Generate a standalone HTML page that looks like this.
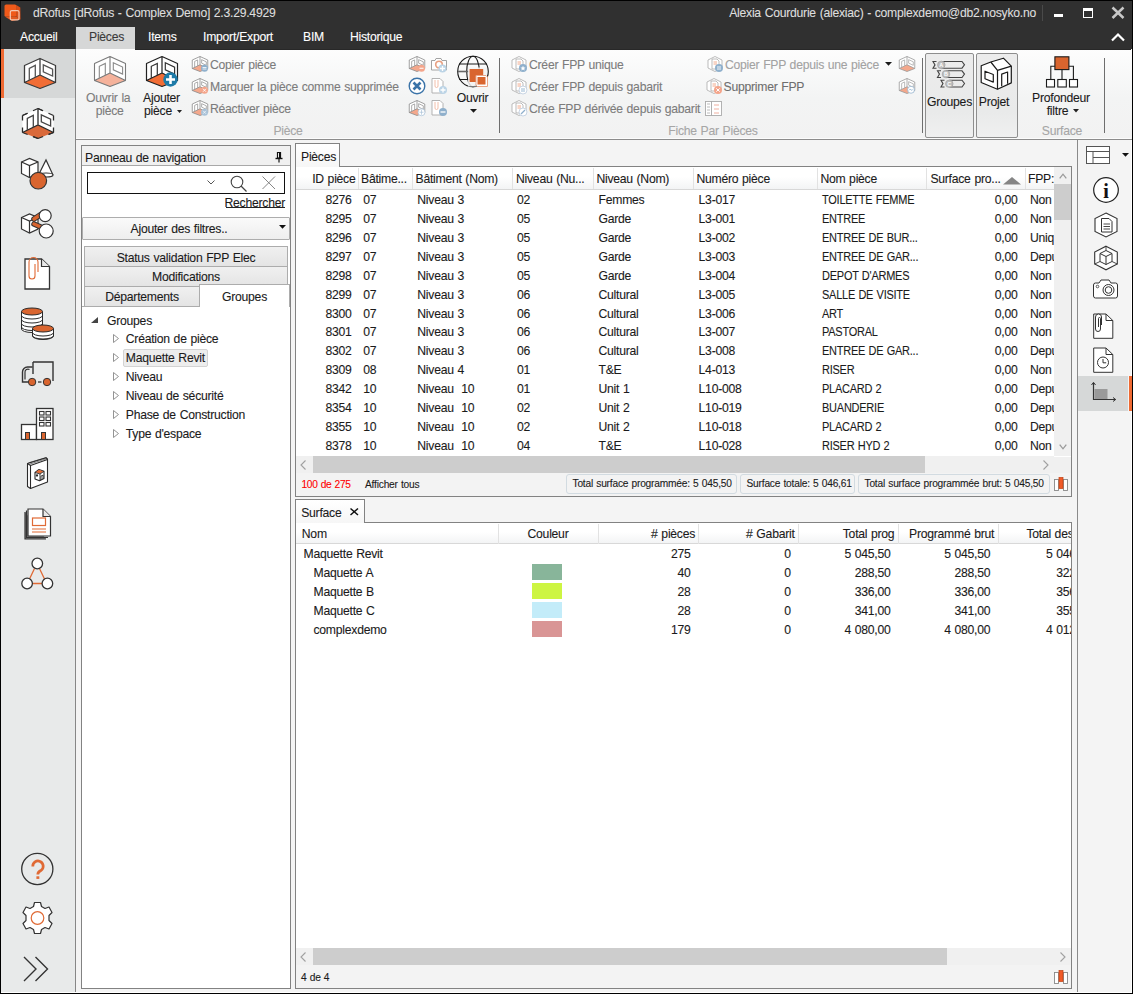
<!DOCTYPE html>
<html><head><meta charset="utf-8">
<style>
*{box-sizing:border-box}
html,body{margin:0;padding:0}
body{width:1133px;height:994px;overflow:hidden;position:relative;background:#000;font-family:"Liberation Sans",sans-serif;font-size:12.2px;color:#1b1b1b}
.a{position:absolute}
.t{position:absolute;white-space:nowrap;line-height:1;letter-spacing:-0.25px;word-spacing:0.6px;-webkit-text-stroke:0.1px currentColor}
svg{position:absolute;overflow:visible}
</style></head><body>
<div class="a" style="left:1px;top:1px;width:1131px;height:48px;background:#303030"></div>
<div class="a" style="left:1px;top:49px;width:1131px;height:944px;background:#f4f4f4;border-right:1px solid #fff;border-bottom:1px solid #fff"></div>
<svg style="left:0px;top:0px;" width="24" height="24" viewBox="0 0 24 24"><path d="M16.3 5 L20.3 7.5 L20.5 19.5 L16.3 17 Z" fill="#d94e18"/>
<path d="M5.5 17 L16.3 16.8 L20.5 19.5 L12 21 Z" fill="#e25a22"/>
<rect x="4.5" y="4.5" width="12" height="12.3" rx="1.6" fill="#f05a1a"/>
<rect x="10.3" y="10.6" width="8.7" height="9.3" rx="1.5" fill="none" stroke="#f4c9b4" stroke-width="1.2"/></svg>
<div class="t" style="top:6.8px;font-size:12.2px;color:#dedede;left:33px;">dRofus [dRofus - Complex Demo] 2.3.29.4929</div>
<div class="t" style="top:6.8px;font-size:12.2px;color:#dedede;left:636px;width:400px;text-align:right;">Alexia Courdurie (alexiac) - complexdemo@db2.nosyko.no</div>
<div class="a" style="left:1042px;top:5px;width:1px;height:16px;background:#4a4a4a"></div>
<div class="a" style="left:1054px;top:14px;width:9px;height:3px;background:#fff"></div>
<div class="a" style="left:1083px;top:8px;width:9.5px;height:9.5px;border:1.2px solid #fff;border-top-width:3px"></div>
<svg style="left:1111px;top:6px;" width="14" height="13" viewBox="0 0 14 13"><path d="M1.5 1.5 L12.5 12 M12.5 1.5 L1.5 12" stroke="#c8c8c8" stroke-width="2.5"/></svg>
<svg style="left:1111px;top:33px;" width="14" height="9" viewBox="0 0 14 9"><path d="M1 7.5 L7 1.5 L13 7.5" stroke="#fff" stroke-width="2.2" fill="none"/></svg>
<div class="a" style="left:76px;top:27px;width:59px;height:22px;background:#d6d7d7"></div>
<div class="t" style="top:31.0px;font-size:12.2px;color:#fff;left:20px;">Accueil</div>
<div class="t" style="top:31.0px;font-size:12.2px;color:#3a3a3a;left:89px;">Pièces</div>
<div class="t" style="top:31.0px;font-size:12.2px;color:#fff;left:148px;">Items</div>
<div class="t" style="top:31.0px;font-size:12.2px;color:#fff;left:203px;">Import/Export</div>
<div class="t" style="top:31.0px;font-size:12.2px;color:#fff;left:303px;">BIM</div>
<div class="t" style="top:31.0px;font-size:12.2px;color:#fff;left:350px;">Historique</div>
<div class="a" style="left:1px;top:49px;width:75px;height:943px;background:#e8eaea;border-right:1px solid #878787"></div>
<div class="a" style="left:1px;top:49px;width:74px;height:49px;background:#d6d8d8"></div>
<div class="a" style="left:1px;top:49px;width:3px;height:49px;background:#ef6a33"></div>
<svg style="left:23.5px;top:58px;" width="32" height="31" viewBox="0 0 32 31"><path d="M16 0.5 L31.5 7.5 L31.5 24.5 L16 17 L0.5 24.5 L0.5 7.5 Z" fill="#fff"/>
<path d="M0.5 24.5 L16 17 L31.5 24.5 L16 30.5 Z" fill="#f26d35"/>
<path d="M16 0.5 L31.5 7.5 L31.5 24.5 L16 30.5 L0.5 24.5 L0.5 7.5 Z M16 0.5 L16 17 M0.5 24.5 L16 17 L31.5 24.5" fill="none" stroke="#3c3c3c" stroke-width="1.3" stroke-linejoin="round" />
<path d="M5.3 22 L5.3 10.3 L11.3 7.4 L11.3 19.3 M19.3 6.8 L28.6 11.1 L28.6 18.1 L19.3 13.8 Z" fill="none" stroke="#555" stroke-width="1.3"/></svg>
<svg style="left:22px;top:108px;" width="32" height="31" viewBox="0 0 32 31"><path d="M16 0.5 L31.5 7.5 L31.5 24.5 L16 30.5 L0.5 24.5 L0.5 7.5 Z" fill="#fff"/>
<path d="M0.5 24.5 L16 17 L31.5 24.5 L16 30.5 Z" fill="#d9693a"/>
<g fill="none" stroke="#2a2a2a" stroke-width="1.3" stroke-dasharray="5.5 6 20">
<path d="M16 0.5 L0.5 7.5"/><path d="M0.5 7.5 L0.5 24.5" stroke-dasharray="0 0.01 5 7 5 20"/><path d="M0.5 24.5 L16 30.5"/><path d="M16 30.5 L31.5 24.5"/><path d="M31.5 24.5 L31.5 7.5" stroke-dasharray="5 7 5 20"/><path d="M31.5 7.5 L16 0.5"/>
<path d="M0.5 7.5 L16 0.5" stroke-dasharray="5.5 20"/><path d="M16 30.5 L0.5 24.5" stroke-dasharray="5.5 20"/><path d="M31.5 24.5 L16 30.5" stroke-dasharray="5.5 20"/><path d="M16 0.5 L31.5 7.5" stroke-dasharray="5.5 20"/></g>
<path d="M16 0.5 L16 17 M0.5 24.5 L16 17 L31.5 24.5" fill="none" stroke="#2a2a2a" stroke-width="1.3"/>
<path d="M5.3 22 L5.3 10.3 L11.3 7.4 L11.3 19.3 M19.3 6.8 L28.6 11.1 L28.6 18.1 L19.3 13.8 Z" fill="none" stroke="#444" stroke-width="1.3"/></svg>
<svg style="left:20px;top:156px;" width="36" height="36" viewBox="0 0 36 36"><path d="M33 19 L26 4 L19.5 17" fill="#fff" stroke="#333" stroke-width="1.2"/>
<ellipse cx="26" cy="19" rx="7" ry="2" fill="#fff" stroke="#333" stroke-width="1.2"/>
<path d="M1.5 6 L9.5 2.5 L18 6 L18 17.5 L9.5 21.5 L1.5 17.5 Z" fill="#fff" stroke="#333" stroke-width="1.2"/>
<path d="M1.5 6 L9.5 9.5 L18 6 M9.5 9.5 L9.5 21.5" fill="none" stroke="#333" stroke-width="1.2"/>
<circle cx="18.3" cy="24.7" r="8.3" fill="#d9652f" stroke="#333" stroke-width="1.2"/></svg>
<svg style="left:20px;top:205px;" width="36" height="36" viewBox="0 0 36 36"><path d="M1.5 12.5 L9.5 9 L18 12.5 L18 24 L9.5 28 L1.5 24 Z" fill="#fff" stroke="#333" stroke-width="1.2"/>
<path d="M1.5 12.5 L9.5 16 L18 12.5 M9.5 16 L9.5 28" fill="none" stroke="#333" stroke-width="1.2"/>
<path d="M14 14 L23 8" stroke="#333" stroke-width="5.5" stroke-linecap="round"/>
<path d="M14 14 L23 8" stroke="#d9652f" stroke-width="3.5" stroke-linecap="round"/>
<path d="M14 19 L23 23" stroke="#333" stroke-width="5.5" stroke-linecap="round"/>
<path d="M14 19 L23 23" stroke="#d9652f" stroke-width="3.5" stroke-linecap="round"/>
<circle cx="25.2" cy="10.6" r="6" fill="#fff" stroke="#333" stroke-width="1.2"/>
<circle cx="26.2" cy="26" r="7" fill="#fff" stroke="#333" stroke-width="1.2"/></svg>
<svg style="left:24px;top:257px;" width="28" height="34" viewBox="0 0 28 34"><path d="M1 2 L17.5 2 L25.5 9.5 L25.5 32 L1 32 Z" fill="#fff" stroke="#333" stroke-width="1.3"/>
<path d="M17.5 2 L17.5 9.5 L25.5 9.5" fill="#e8e8e8" stroke="#333" stroke-width="1.2"/>
<path d="M14 15 L14 5 A4.5 4.5 0 0 0 5 5 L5 19 A3 3 0 0 0 11 19 L11 7" fill="none" stroke="#e06a35" stroke-width="1.1"/></svg>
<svg style="left:20px;top:307px;" width="36" height="34" viewBox="0 0 36 34"><g stroke="#2a2a2a" stroke-width="1">
<path d="M1.5 4.5 L1.5 22 A10.5 3.5 0 0 0 22.5 22 L22.5 4.5" fill="#fff"/>
<path d="M1.5 8.5 A10.5 3.5 0 0 0 22.5 8.5 M1.5 12.5 A10.5 3.5 0 0 0 22.5 12.5 M1.5 16.5 A10.5 3.5 0 0 0 22.5 16.5 M1.5 20 A10.5 3.5 0 0 0 22.5 20" fill="none"/>
<ellipse cx="12" cy="4.5" rx="10.5" ry="3.5" fill="#d9652f"/>
<path d="M12.5 21.5 L12.5 29 A10.5 3.5 0 0 0 33.5 29 L33.5 21.5" fill="#fff"/>
<path d="M12.5 25.5 A10.5 3.5 0 0 0 33.5 25.5 M12.5 28.5 A10.5 3.5 0 0 0 33.5 28.5" fill="none"/>
<ellipse cx="23" cy="21.5" rx="10.5" ry="3.5" fill="#d9652f"/></g></svg>
<svg style="left:20px;top:360px;" width="36" height="28" viewBox="0 0 36 28"><path d="M13 2 L33 2 L33 21" fill="none" stroke="#333" stroke-width="1.4"/>
<path d="M13 2 L13 14" fill="none" stroke="#333" stroke-width="1.4"/>
<path d="M12.5 7 L7.5 7 A5 5 0 0 0 2.5 12 L2.5 22 L8 22" fill="none" stroke="#333" stroke-width="1.4"/>
<path d="M9.5 9.5 A3 3 0 0 0 5 12.5 L5 19.5" fill="none" stroke="#333" stroke-width="1.2"/>
<path d="M18 22 L21.5 22" stroke="#333" stroke-width="1.3"/>
<circle cx="12.1" cy="22" r="3.7" fill="#d9652f" stroke="#333" stroke-width="1"/>
<circle cx="27" cy="22" r="3.7" fill="#d9652f" stroke="#333" stroke-width="1"/></svg>
<svg style="left:20px;top:406px;" width="36" height="36" viewBox="0 0 36 36"><g stroke="#333" stroke-width="1.3">
<rect x="1.5" y="18.5" width="15" height="15" fill="#fff"/>
<rect x="16.5" y="2.5" width="16.5" height="31" fill="#fff"/>
<rect x="5.5" y="26.5" width="4" height="7" fill="#d9652f" stroke-width="1"/>
<rect x="21.5" y="26.5" width="4" height="7" fill="#d9652f" stroke-width="1"/>
<g fill="#fff" stroke-width="1.1"><rect x="19.5" y="5.5" width="4.5" height="3.5"/><rect x="26" y="5.5" width="4.5" height="3.5"/>
<rect x="19.5" y="11" width="4.5" height="3.5"/><rect x="26" y="11" width="4.5" height="3.5"/>
<rect x="19.5" y="16.5" width="4.5" height="3.5"/><rect x="26" y="16.5" width="4.5" height="3.5"/></g></g></svg>
<svg style="left:26px;top:457px;" width="24" height="34" viewBox="0 0 24 34"><g stroke="#2a2a2a" stroke-width="1.1" stroke-linejoin="round">
<path d="M1.5 6.5 L20 0.8 L21.5 2 L21.5 25 L4.5 31.5 L1.5 29.5 Z" fill="#fff"/>
<path d="M1.5 6.5 L4.5 8.5 L21.5 2.5 M4.5 8.5 L4.5 31.5" fill="none"/>
<path d="M2.5 5.8 L20.5 0.5 M3.5 7.2 L21 1.5" fill="none" stroke-width="0.6"/>
<path d="M9 15.5 L13 12.5 L18 14.3 L18 21.5 L13.5 23.8 L9 22 Z" fill="#fff"/>
<path d="M9.5 15.3 L13 12.8 L17.5 14.5 L14 16.8 Z" fill="#e06a35" stroke="none"/>
<path d="M9 15.5 L14 17 L18 14.3 M14 17 L14 23.5" fill="none" stroke-width="0.9"/>
<path d="M15 23 L15 19 L17 18.2 L17 22" fill="none" stroke-width="0.9"/><circle cx="11" cy="18.5" r="0.6" fill="#2a2a2a"/></g></svg>
<svg style="left:22px;top:506px;" width="32" height="36" viewBox="0 0 32 36"><g stroke="#333" stroke-width="1.2">
<path d="M3 6 L3 33 L24 33" fill="#888"/>
<path d="M4.5 4.5 L4.5 31.5 L26 31.5" fill="none"/>
<path d="M6 3 L21 3 L28.5 10.5 L28.5 30 L6 30 Z" fill="#fff"/>
<path d="M21 3 L21 10.5 L28.5 10.5" fill="#e8e8e8"/></g>
<g stroke="#e06a35" stroke-width="1.2" fill="none"><rect x="10.5" y="12" width="13" height="7.5"/><path d="M10 23 L24 23 M10 26 L24 26"/></g></svg>
<svg style="left:20px;top:554px;" width="36" height="36" viewBox="0 0 36 36"><g stroke="#333" stroke-width="1.3" fill="#fff">
<path d="M14.5 14.5 L9.5 25 M19.5 14.5 L24.5 25 M12.5 29.5 L22 29.5" stroke="#e06a35" fill="none"/>
<circle cx="17.3" cy="9.5" r="5.3"/><circle cx="7.1" cy="29.5" r="5.3"/><circle cx="27.4" cy="29.5" r="5.3"/></g></svg>
<svg style="left:19px;top:851px;" width="38" height="38" viewBox="0 0 38 38"><circle cx="18.3" cy="18" r="15.6" fill="none" stroke="#333" stroke-width="1.3"/></svg>
<svg style="left:19px;top:851px;" width="38" height="38" viewBox="0 0 38 38"><path d="M13.8 15.5 A5.2 5.2 0 1 1 22.3 19.2 Q18.8 20.8 18.8 23.5" fill="none" stroke="#e06a35" stroke-width="2.7"/><rect x="17.4" y="25.3" width="2.9" height="2.6" fill="#e06a35"/></svg>
<svg style="left:19px;top:900px;" width="38" height="38" viewBox="0 0 38 38"><path d="M15.5 2.5 L21.5 2.5 L22.5 6.5 L26 8.5 L30 7 L33 12.5 L30 15.5 L30 20.5 L33 23.5 L30 29 L26 27.5 L22.5 29.5 L21.5 33.5 L15.5 33.5 L14.5 29.5 L11 27.5 L7 29 L4 23.5 L7 20.5 L7 15.5 L4 12.5 L7 7 L11 8.5 L14.5 6.5 Z" fill="#fff" stroke="#333" stroke-width="1.2" stroke-linejoin="round"/>
<circle cx="18.5" cy="18" r="6.3" fill="none" stroke="#e06a35" stroke-width="1.2"/></svg>
<svg style="left:22px;top:955px;" width="30" height="28" viewBox="0 0 30 28"><path d="M2 2 L14 14 L2 26 M13.5 2 L25.5 14 L13.5 26" fill="none" stroke="#333" stroke-width="1.4"/></svg>
<div class="a" style="left:76px;top:49px;width:1056px;height:91px;background:linear-gradient(#fdfdfd 0%,#f3f4f4 55%,#f2f2f2 100%);border-bottom:1px solid #8c8c8c"></div>
<div class="a" style="left:76px;top:138px;width:1055px;height:1px;background:#fcfcfc"></div>
<div class="a" style="left:135px;top:49px;width:996px;height:1px;background:#282828"></div>
<svg style="left:94px;top:56px;" width="32" height="31" viewBox="0 0 32 31"><path d="M16 0.5 L31.5 7.5 L31.5 24.5 L16 17 L0.5 24.5 L0.5 7.5 Z" fill="#fff"/>
<path d="M0.5 24.5 L16 17 L31.5 24.5 L16 30.5 Z" fill="#f5b29b"/>
<path d="M16 0.5 L31.5 7.5 L31.5 24.5 L16 30.5 L0.5 24.5 L0.5 7.5 Z M16 0.5 L16 17 M0.5 24.5 L16 17 L31.5 24.5" fill="none" stroke="#7a7a7a" stroke-width="1.1" stroke-linejoin="round" />
<path d="M5.3 22 L5.3 10.3 L11.3 7.4 L11.3 19.3 M19.3 6.8 L28.6 11.1 L28.6 18.1 L19.3 13.8 Z" fill="none" stroke="#8a8a8a" stroke-width="1.1"/></svg>
<div class="t" style="top:92.2px;font-size:12.2px;color:#7c7c7c;left:-91.8px;width:400px;text-align:center;">Ouvrir la</div>
<div class="t" style="top:105.2px;font-size:12.2px;color:#7c7c7c;left:-90.3px;width:400px;text-align:center;">pièce</div>
<svg style="left:146px;top:56px;" width="32" height="31" viewBox="0 0 32 31"><path d="M16 0.5 L31.5 7.5 L31.5 24.5 L16 17 L0.5 24.5 L0.5 7.5 Z" fill="#fff"/>
<path d="M0.5 24.5 L16 17 L31.5 24.5 L16 30.5 Z" fill="#f26d35"/>
<path d="M16 0.5 L31.5 7.5 L31.5 24.5 L16 30.5 L0.5 24.5 L0.5 7.5 Z M16 0.5 L16 17 M0.5 24.5 L16 17 L31.5 24.5" fill="none" stroke="#222" stroke-width="1.2" stroke-linejoin="round" />
<path d="M5.3 22 L5.3 10.3 L11.3 7.4 L11.3 19.3 M19.3 6.8 L28.6 11.1 L28.6 18.1 L19.3 13.8 Z" fill="none" stroke="#333" stroke-width="1.2"/></svg>
<svg style="left:163px;top:72px;" width="15" height="15" viewBox="0 0 15 15"><circle cx="7.5" cy="7.5" r="7.2" fill="#1e7ba8"/><path d="M7.5 3 L7.5 12 M3 7.5 L12 7.5" stroke="#fff" stroke-width="2.6"/></svg>
<div class="t" style="top:92.2px;font-size:12.2px;left:-38.5px;width:400px;text-align:center;">Ajouter</div>
<div class="t" style="top:105.2px;font-size:12.2px;left:-42px;width:400px;text-align:center;">pièce</div>
<svg style="left:176.5px;top:109.5px;" width="5" height="3" viewBox="0 0 5 3"><path d="M0 0 L5 0 L2.5 3 Z" fill="#222"/></svg>
<svg style="left:192px;top:56px;" width="16" height="16" viewBox="0 0 32 31"><path d="M16 0.5 L31.5 7.5 L31.5 24.5 L16 17 L0.5 24.5 L0.5 7.5 Z" fill="#fff"/>
<path d="M0.5 24.5 L16 17 L31.5 24.5 L16 30.5 Z" fill="#f4a88c"/>
<path d="M16 0.5 L31.5 7.5 L31.5 24.5 L16 30.5 L0.5 24.5 L0.5 7.5 Z M16 0.5 L16 17 M0.5 24.5 L16 17 L31.5 24.5" fill="none" stroke="#8a8a8a" stroke-width="1.6" stroke-linejoin="round" />
<path d="M5.3 22 L5.3 10.3 L11.3 7.4 L11.3 19.3 M19.3 6.8 L28.6 11.1 L28.6 18.1 L19.3 13.8 Z" fill="none" stroke="#999" stroke-width="1.6"/><circle cx="25" cy="24" r="7" fill="#8fb0cc"/><path d="M21 22.5 L29 22.5 M21 25.5 L29 25.5" stroke="#fff" stroke-width="1.6"/></svg>
<div class="t" style="top:58.9px;font-size:12.2px;color:#7c7c7c;left:210px;">Copier pièce</div>
<svg style="left:192px;top:78px;" width="16" height="16" viewBox="0 0 32 31"><path d="M16 0.5 L31.5 7.5 L31.5 24.5 L16 17 L0.5 24.5 L0.5 7.5 Z" fill="#fff"/>
<path d="M0.5 24.5 L16 17 L31.5 24.5 L16 30.5 Z" fill="#f4a88c"/>
<path d="M16 0.5 L31.5 7.5 L31.5 24.5 L16 30.5 L0.5 24.5 L0.5 7.5 Z M16 0.5 L16 17 M0.5 24.5 L16 17 L31.5 24.5" fill="none" stroke="#8a8a8a" stroke-width="1.6" stroke-linejoin="round" />
<path d="M5.3 22 L5.3 10.3 L11.3 7.4 L11.3 19.3 M19.3 6.8 L28.6 11.1 L28.6 18.1 L19.3 13.8 Z" fill="none" stroke="#999" stroke-width="1.6"/><circle cx="25" cy="24" r="7" fill="#f4a58b"/><path d="M22 21 L28 27 M28 21 L22 27" stroke="#fff" stroke-width="1.8"/></svg>
<div class="t" style="top:80.9px;font-size:12.2px;color:#7c7c7c;left:210px;">Marquer la pièce comme supprimée</div>
<svg style="left:192px;top:100px;" width="16" height="16" viewBox="0 0 32 31"><path d="M16 0.5 L31.5 7.5 L31.5 24.5 L16 17 L0.5 24.5 L0.5 7.5 Z" fill="#fff"/>
<path d="M0.5 24.5 L16 17 L31.5 24.5 L16 30.5 Z" fill="#f4a88c"/>
<path d="M16 0.5 L31.5 7.5 L31.5 24.5 L16 30.5 L0.5 24.5 L0.5 7.5 Z M16 0.5 L16 17 M0.5 24.5 L16 17 L31.5 24.5" fill="none" stroke="#8a8a8a" stroke-width="1.6" stroke-linejoin="round" />
<path d="M5.3 22 L5.3 10.3 L11.3 7.4 L11.3 19.3 M19.3 6.8 L28.6 11.1 L28.6 18.1 L19.3 13.8 Z" fill="none" stroke="#999" stroke-width="1.6"/><circle cx="25" cy="24" r="7" fill="#a9c2d8"/><path d="M22 21 L28 27 M28 21 L22 27" stroke="#fff" stroke-width="1.4"/></svg>
<div class="t" style="top:102.9px;font-size:12.2px;color:#7c7c7c;left:210px;">Réactiver pièce</div>
<svg style="left:409px;top:56px;" width="16" height="16" viewBox="0 0 32 31"><path d="M16 0.5 L31.5 7.5 L31.5 24.5 L16 17 L0.5 24.5 L0.5 7.5 Z" fill="#fff"/>
<path d="M0.5 24.5 L16 17 L31.5 24.5 L16 30.5 Z" fill="#f4a88c"/>
<path d="M16 0.5 L31.5 7.5 L31.5 24.5 L16 30.5 L0.5 24.5 L0.5 7.5 Z M16 0.5 L16 17 M0.5 24.5 L16 17 L31.5 24.5" fill="none" stroke="#8a8a8a" stroke-width="1.6" stroke-linejoin="round" />
<path d="M5.3 22 L5.3 10.3 L11.3 7.4 L11.3 19.3 M19.3 6.8 L28.6 11.1 L28.6 18.1 L19.3 13.8 Z" fill="none" stroke="#999" stroke-width="1.6"/><circle cx="25" cy="24" r="7" fill="#f4a58b"/><path d="M21 24 L29 24" stroke="#fff" stroke-width="2"/></svg>
<svg style="left:409px;top:100px;" width="16" height="16" viewBox="0 0 32 31"><path d="M16 0.5 L31.5 7.5 L31.5 24.5 L16 17 L0.5 24.5 L0.5 7.5 Z" fill="#fff"/>
<path d="M0.5 24.5 L16 17 L31.5 24.5 L16 30.5 Z" fill="#f4a88c"/>
<path d="M16 0.5 L31.5 7.5 L31.5 24.5 L16 30.5 L0.5 24.5 L0.5 7.5 Z M16 0.5 L16 17 M0.5 24.5 L16 17 L31.5 24.5" fill="none" stroke="#8a8a8a" stroke-width="1.6" stroke-linejoin="round" />
<path d="M5.3 22 L5.3 10.3 L11.3 7.4 L11.3 19.3 M19.3 6.8 L28.6 11.1 L28.6 18.1 L19.3 13.8 Z" fill="none" stroke="#999" stroke-width="1.6"/><circle cx="25" cy="24" r="7" fill="#fff" stroke="#a9c2d8" stroke-width="1.5"/><path d="M25 19 L25 29 M21 24 L29 24" stroke="#a9c2d8" stroke-width="1.4"/></svg>
<svg style="left:408px;top:77px;" width="18" height="18" viewBox="0 0 18 18"><circle cx="9" cy="9" r="7.8" fill="#fff" stroke="#3a73a8" stroke-width="1.4"/><path d="M5.5 5.5 L12.5 12.5 M12.5 5.5 L5.5 12.5" stroke="#3a73a8" stroke-width="2.6"/></svg>
<svg style="left:431px;top:57px;" width="16" height="16" viewBox="0 0 16 16"><path d="M0.5 3.5 L4 3.5 L5 1.5 L10 1.5 L11 3.5 L15.5 3.5 L15.5 13 L0.5 13 Z" fill="#fff" stroke="#999" stroke-width="0.9"/>
<circle cx="8" cy="7.5" r="3.3" fill="none" stroke="#e8a082" stroke-width="1.6"/>
<circle cx="11.5" cy="11.5" r="4" fill="#bcd4e6"/><path d="M11.5 9 L11.5 14 M9 11.5 L14 11.5" stroke="#fff" stroke-width="1.3"/></svg>
<svg style="left:431px;top:78px;" width="16" height="16" viewBox="0 0 16 16"><path d="M1 0.5 L9 0.5 L12 3.5 L12 15 L1 15 Z" fill="#fff" stroke="#aaa" stroke-width="0.9"/>
<path d="M4 2 L4 8 A1.5 1.5 0 0 0 7 8 L7 2" fill="none" stroke="#f0b8a0" stroke-width="0.9"/><circle cx="12" cy="12" r="4" fill="#bcd4e6"/><path d="M12 9.5 L12 14.5 M9.5 12 L14.5 12" stroke="#fff" stroke-width="1.3"/></svg>
<svg style="left:431px;top:100px;" width="16" height="16" viewBox="0 0 16 16"><path d="M1 0.5 L9 0.5 L12 3.5 L12 15 L1 15 Z" fill="#fff" stroke="#aaa" stroke-width="0.9"/>
<path d="M4 2 L4 8 A1.5 1.5 0 0 0 7 8 L7 2" fill="none" stroke="#f0b8a0" stroke-width="0.9"/><circle cx="12" cy="12" r="4" fill="#8fb0cc"/><path d="M9.5 12 L14.5 12" stroke="#fff" stroke-width="1.3"/></svg>
<svg style="left:456px;top:55px;" width="36" height="36" viewBox="0 0 36 36"><g fill="none" stroke="#1a1a1a" stroke-width="1.1">
<circle cx="17" cy="16.5" r="15.3"/><ellipse cx="17" cy="16.5" rx="6.3" ry="15.3"/>
<path d="M3.2 9 L30.8 9 M1.7 16.5 L14 16.5 M3.2 24.5 L14 24.5"/></g>
<path d="M1.7 16.5 L14 16.5" stroke="#666" stroke-width="1.6"/>
<rect x="12" y="12.5" width="19" height="19" fill="#f3f3f3" opacity="0.85"/>
<rect x="13.6" y="14" width="13.6" height="13" fill="#d9652f"/>
<path d="M20 20.5 L30 20.5 L31.5 22 L31.5 31.5 L21.5 31.5 L20 30 Z" fill="#fff" stroke="#e9a588" stroke-width="1"/>
<rect x="21.5" y="22" width="8" height="7.5" fill="#d9652f"/></svg>
<div class="t" style="top:92.2px;font-size:12.2px;left:272.5px;width:400px;text-align:center;">Ouvrir</div>
<svg style="left:470px;top:108.5px;" width="7" height="4" viewBox="0 0 7 4"><path d="M0 0 L7 0 L3.5 3.8 Z" fill="#1a1a1a"/></svg>
<div class="t" style="top:125.1px;font-size:12.2px;color:#a6a6a6;left:88px;width:400px;text-align:center;">Pièce</div>
<div class="a" style="left:499px;top:58px;width:1px;height:75px;background:#6e6e6e"></div>
<svg style="left:511px;top:56px;" width="16" height="16" viewBox="0 0 16 16"><path d="M8 0.5 L15 4 L15 12 L8 15.5 L1 12 L1 4 Z" fill="#fff" stroke="#aaa" stroke-width="0.8"/>
<path d="M5 3 L10 3 L12 5 L12 13 L5 13 Z" fill="#fff" stroke="#aaa" stroke-width="0.8"/>
<path d="M6.5 6 L10 6 M6.5 8 L10 8" stroke="#f0a080" stroke-width="0.9"/><circle cx="12" cy="12" r="4" fill="#8fb0cc"/><path d="M12 9.7 L12.8 11.4 L14.5 11.6 L13.2 12.8 L13.6 14.5 L12 13.6 L10.4 14.5 L10.8 12.8 L9.5 11.6 L11.2 11.4 Z" fill="#fff"/></svg>
<div class="t" style="top:58.9px;font-size:12.2px;color:#7c7c7c;left:529px;">Créer FPP unique</div>
<svg style="left:511px;top:78px;" width="16" height="16" viewBox="0 0 16 16"><path d="M8 0.5 L15 4 L15 12 L8 15.5 L1 12 L1 4 Z" fill="#fff" stroke="#aaa" stroke-width="0.8"/>
<path d="M5 3 L10 3 L12 5 L12 13 L5 13 Z" fill="#fff" stroke="#aaa" stroke-width="0.8"/>
<path d="M6.5 6 L10 6 M6.5 8 L10 8" stroke="#f0a080" stroke-width="0.9"/><circle cx="12" cy="12" r="4" fill="#fff" stroke="#bcd" stroke-width="0.8"/><path d="M10 11 L14 11 M10 13 L14 13" stroke="#8fb0cc" stroke-width="0.9"/></svg>
<div class="t" style="top:80.9px;font-size:12.2px;color:#7c7c7c;left:529px;">Créer FPP depuis gabarit</div>
<svg style="left:511px;top:100px;" width="16" height="16" viewBox="0 0 16 16"><path d="M8 0.5 L15 4 L15 12 L8 15.5 L1 12 L1 4 Z" fill="#fff" stroke="#aaa" stroke-width="0.8"/>
<path d="M5 3 L10 3 L12 5 L12 13 L5 13 Z" fill="#fff" stroke="#aaa" stroke-width="0.8"/>
<path d="M6.5 6 L10 6 M6.5 8 L10 8" stroke="#f0a080" stroke-width="0.9"/><circle cx="12" cy="12" r="4" fill="#fff" stroke="#bcd" stroke-width="0.8"/><path d="M10 14 L14 10" stroke="#8fb0cc" stroke-width="1.3"/></svg>
<div class="t" style="top:102.9px;font-size:12.2px;color:#7c7c7c;left:529px;">Crée FPP dérivée depuis gabarit</div>
<svg style="left:705px;top:101px;" width="17" height="15" viewBox="0 0 17 15"><g fill="#fff" stroke="#aaa" stroke-width="0.9"><rect x="0.5" y="0.5" width="6" height="14"/><rect x="6.5" y="0.5" width="10" height="14"/></g>
<path d="M2 3 L5 3 M2 6 L5 6 M2 9 L5 9 M2 12 L5 12" stroke="#bbb"/><path d="M9 4 L14 4 M9 8 L14 8 M9 12 L14 12" stroke="#f0b0a0"/></svg>
<svg style="left:707px;top:56px;" width="16" height="16" viewBox="0 0 16 16"><path d="M8 0.5 L15 4 L15 12 L8 15.5 L1 12 L1 4 Z" fill="#fff" stroke="#aaa" stroke-width="0.8"/>
<path d="M5 3 L10 3 L12 5 L12 13 L5 13 Z" fill="#fff" stroke="#aaa" stroke-width="0.8"/>
<path d="M6.5 6 L10 6 M6.5 8 L10 8" stroke="#f0a080" stroke-width="0.9"/><circle cx="12" cy="12" r="4" fill="#8fb0cc"/><path d="M10 11 L14 11 M10 13 L14 13" stroke="#fff" stroke-width="0.9"/></svg>
<div class="t" style="top:58.9px;font-size:12.2px;color:#a2a2a2;left:725px;">Copier FPP depuis une pièce</div>
<svg style="left:885px;top:62px;" width="7" height="4" viewBox="0 0 7 4"><path d="M0 0 L7 0 L3.5 3.8 Z" fill="#1a1a1a"/></svg>
<svg style="left:706px;top:78px;" width="16" height="16" viewBox="0 0 16 16"><path d="M8 0.5 L15 4 L15 12 L8 15.5 L1 12 L1 4 Z" fill="#fff" stroke="#aaa" stroke-width="0.8"/>
<path d="M5 3 L10 3 L12 5 L12 13 L5 13 Z" fill="#fff" stroke="#aaa" stroke-width="0.8"/>
<path d="M6.5 6 L10 6 M6.5 8 L10 8" stroke="#f0a080" stroke-width="0.9"/><circle cx="12" cy="12" r="4" fill="#f4a58b"/><path d="M10.3 10.3 L13.7 13.7 M13.7 10.3 L10.3 13.7" stroke="#fff" stroke-width="1"/></svg>
<div class="t" style="top:80.7px;font-size:12.2px;color:#6e6e6e;left:723.5px;">Supprimer FPP</div>
<svg style="left:899px;top:56px;" width="16" height="16" viewBox="0 0 32 31"><path d="M16 0.5 L31.5 7.5 L31.5 24.5 L16 17 L0.5 24.5 L0.5 7.5 Z" fill="#fff"/>
<path d="M0.5 24.5 L16 17 L31.5 24.5 L16 30.5 Z" fill="#f4a88c"/>
<path d="M16 0.5 L31.5 7.5 L31.5 24.5 L16 30.5 L0.5 24.5 L0.5 7.5 Z M16 0.5 L16 17 M0.5 24.5 L16 17 L31.5 24.5" fill="none" stroke="#999" stroke-width="1.6" stroke-linejoin="round" />
<path d="M5.3 22 L5.3 10.3 L11.3 7.4 L11.3 19.3 M19.3 6.8 L28.6 11.1 L28.6 18.1 L19.3 13.8 Z" fill="none" stroke="#aaa" stroke-width="1.6"/></svg>
<svg style="left:899px;top:78px;" width="16" height="16" viewBox="0 0 32 31"><path d="M16 0.5 L31.5 7.5 L31.5 24.5 L16 17 L0.5 24.5 L0.5 7.5 Z" fill="#fff"/>
<path d="M0.5 24.5 L16 17 L31.5 24.5 L16 30.5 Z" fill="#f4a88c"/>
<path d="M16 0.5 L31.5 7.5 L31.5 24.5 L16 30.5 L0.5 24.5 L0.5 7.5 Z M16 0.5 L16 17 M0.5 24.5 L16 17 L31.5 24.5" fill="none" stroke="#999" stroke-width="1.6" stroke-linejoin="round" />
<path d="M5.3 22 L5.3 10.3 L11.3 7.4 L11.3 19.3 M19.3 6.8 L28.6 11.1 L28.6 18.1 L19.3 13.8 Z" fill="none" stroke="#aaa" stroke-width="1.6"/><circle cx="24" cy="23" r="7" fill="#fff" stroke="#8fb0cc" stroke-width="1.5"/><path d="M20 24 Q22 20 24 23 T28 22" fill="none" stroke="#8fb0cc" stroke-width="1.5"/></svg>
<div class="t" style="top:125.1px;font-size:12.2px;color:#a6a6a6;left:513px;width:400px;text-align:center;">Fiche Par Pièces</div>
<div class="a" style="left:922px;top:58px;width:1px;height:75px;background:#6e6e6e"></div>
<div class="a" style="left:925px;top:53px;width:49px;height:85px;background:linear-gradient(#ececec,#e9eaea 70%,#f0f0f0);border:1px solid #8e8e8e;border-radius:2px"></div>
<div class="a" style="left:976px;top:53px;width:42px;height:85px;background:linear-gradient(#ececec,#e9eaea 70%,#f0f0f0);border:1px solid #8e8e8e;border-radius:2px"></div>
<svg style="left:925px;top:54px;" width="48" height="40" viewBox="0 0 48 40"><g fill="none" stroke="#444" stroke-width="1.1">
<path d="M16.5 7.5 L37 7.5 L39.5 10.8 L37 14.2 L16.5 14.2"/>
<path d="M21 16.8 L37 16.8 L39.5 20.1 L37 23.5 L21 23.5"/>
<path d="M24.5 26.2 L37 26.2 L39.5 29.5 L37 33 L24.5 33"/>
<path d="M11.5 7.5 L8 7.5 L10 10.9 L8 14.3 L11.5 14.3 M16 16.8 L12.5 16.8 L14.5 20.1 L12.5 23.5 L16 23.5 M19.5 26.2 L16 26.2 L18 29.6 L16 33 L19.5 33"/></g>
<g fill="#bdbdbd" stroke="#9a9a9a" stroke-width="0.6"><circle cx="16.3" cy="10.9" r="3.8"/><circle cx="21" cy="20.1" r="3.8"/><circle cx="24.3" cy="29.8" r="3.8"/></g>
<g font-family="Liberation Sans" font-size="5.5" font-weight="bold" fill="#fff" text-anchor="middle"><text x="16.3" y="12.9">A</text><text x="21" y="22.1">B</text><text x="24.3" y="31.8">C</text></g></svg>
<div class="t" style="top:95.7px;font-size:12.2px;left:749.5px;width:400px;text-align:center;">Groupes</div>
<svg style="left:978px;top:55px;" width="36" height="36" viewBox="0 0 36 36"><g fill="#fff" stroke="#1a1a1a" stroke-width="1.2" stroke-linejoin="round">
<path d="M3.2 10.7 L12.8 7 L25.4 3.2 L33.3 11.2 L33.3 27.9 L19.5 34.2 L3.2 27.5 Z"/>
<path d="M12.8 7 L19.5 15.3 L33.3 11.2 M19.5 15.3 L19.5 34.2" fill="none"/>
<path d="M7 16.2 L15.3 19.5 L15.3 27.1 L7 23.7 Z"/>
<path d="M23.7 31.3 L23.7 19.1 L29.6 17 L29.6 28.8" fill="none"/></g></svg>
<div class="t" style="top:95.7px;font-size:12.2px;left:794px;width:400px;text-align:center;">Projet</div>
<svg style="left:1045px;top:56px;" width="34" height="33" viewBox="0 0 34 33"><rect x="9.9" y="0.8" width="14" height="12.8" fill="#d9652f" stroke="#1a1a1a" stroke-width="1.1"/>
<path d="M9.9 10.3 L5.8 10.3 L5.8 23.4 M24 10.3 L28.4 10.3 L28.4 23.4 M17 13.6 L17 23.4" fill="none" stroke="#1a1a1a" stroke-width="1.1"/>
<g fill="#fff" stroke="#1a1a1a" stroke-width="1.1"><rect x="1.5" y="23.5" width="8" height="7.5"/><rect x="12.8" y="23.5" width="8.5" height="7.5"/><rect x="24.5" y="23.5" width="8" height="7.5"/></g></svg>
<div class="t" style="top:92.2px;font-size:12.2px;left:861px;width:400px;text-align:center;">Profondeur</div>
<div class="t" style="top:105.2px;font-size:12.2px;left:857.5px;width:400px;text-align:center;">filtre</div>
<svg style="left:1073px;top:109px;" width="6" height="4" viewBox="0 0 6 4"><path d="M0 0 L6 0 L3 3.5 Z" fill="#222"/></svg>
<div class="t" style="top:125.3px;font-size:12.2px;color:#a6a6a6;left:862px;width:400px;text-align:center;">Surface</div>
<div class="a" style="left:1104px;top:58px;width:1px;height:75px;background:#6e6e6e"></div>
<div class="a" style="left:1077px;top:140px;width:1px;height:852px;background:#8a8a8a"></div>
<div class="a" style="left:1078px;top:376px;width:50px;height:35px;background:#d6d8d8"></div>
<div class="a" style="left:1129px;top:376px;width:2.5px;height:35px;background:#ef6a33"></div>
<div class="a" style="left:81px;top:145px;width:210px;height:844px;background:#fff;border:1px solid #828282"></div>
<div class="a" style="left:295px;top:166px;width:777px;height:331px;background:#fff;border:1px solid #828282"></div>
<div class="a" style="left:295px;top:522px;width:777px;height:467px;background:#fff;border:1px solid #828282"></div>
<div class="a" style="left:82px;top:146px;width:208px;height:20px;background:#f0f0f0;border-bottom:1px solid #a8a8a8"></div>
<div class="t" style="top:151.5px;font-size:12.2px;left:85px;">Panneau de navigation</div>
<svg style="left:275px;top:152px;" width="8" height="11" viewBox="0 0 8 11"><path d="M2.5 0.5 L5.5 0.5 L5.5 6 L2.5 6 Z" fill="#fff" stroke="#111" stroke-width="1.2"/><path d="M4.5 1 L4.5 6" stroke="#111" stroke-width="1"/><path d="M0.5 6.5 L7.5 6.5" stroke="#111" stroke-width="1.4"/><path d="M4 7 L4 10.5" stroke="#111" stroke-width="1.2"/></svg>
<div class="a" style="left:87px;top:172px;width:198px;height:22px;background:#fff;border:1.5px solid #111"></div>
<svg style="left:207px;top:180px;" width="8" height="5" viewBox="0 0 8 5"><path d="M0.5 0.5 L4 4 L7.5 0.5" fill="none" stroke="#555" stroke-width="1"/></svg>
<svg style="left:230px;top:175px;" width="18" height="17" viewBox="0 0 18 17"><circle cx="7" cy="7" r="5.8" fill="none" stroke="#444" stroke-width="1.1"/><path d="M11 11 L16.5 16.5" stroke="#444" stroke-width="1.2"/></svg>
<svg style="left:262px;top:176px;" width="14" height="14" viewBox="0 0 14 14"><path d="M0.5 0.5 L13 13 M13 0.5 L0.5 13" stroke="#777" stroke-width="0.9"/></svg>
<div class="t" style="top:197.1px;font-size:12.2px;left:-115px;width:400px;text-align:right;">Rechercher</div>
<div class="a" style="left:226px;top:207px;width:59px;height:1px;background:#222"></div>
<div class="a" style="left:82px;top:217px;width:208px;height:23px;background:linear-gradient(#fafafa,#eeeeee);border:1px solid #adadad;border-radius:1px"></div>
<div class="t" style="top:223.1px;font-size:12.2px;left:-21px;width:400px;text-align:center;">Ajouter des filtres..</div>
<svg style="left:279px;top:225px;" width="7" height="4" viewBox="0 0 7 4"><path d="M0 0 L7 0 L3.5 3.8 Z" fill="#111"/></svg>
<div class="a" style="left:84px;top:246px;width:204px;height:21px;background:linear-gradient(#f0f0f0,#e4e4e4);border:1px solid #acacac"></div>
<div class="t" style="top:251.5px;font-size:12.2px;left:-14px;width:400px;text-align:center;">Status validation FPP Elec</div>
<div class="a" style="left:84px;top:266px;width:204px;height:21px;background:linear-gradient(#f0f0f0,#e4e4e4);border:1px solid #acacac"></div>
<div class="t" style="top:271.1px;font-size:12.2px;left:-14px;width:400px;text-align:center;">Modifications</div>
<div class="a" style="left:84px;top:286px;width:116px;height:21px;background:linear-gradient(#f0f0f0,#e4e4e4);border:1px solid #acacac"></div>
<div class="t" style="top:291.1px;font-size:12.2px;left:-58px;width:400px;text-align:center;">Départements</div>
<div class="a" style="left:199px;top:284px;width:91px;height:23px;background:#fff;border:1px solid #acacac;border-bottom:none"></div>
<div class="t" style="top:290.5px;font-size:12.2px;left:44.5px;width:400px;text-align:center;">Groupes</div>
<div class="a" style="left:82px;top:306px;width:117px;height:1px;background:#acacac"></div>
<svg style="left:91px;top:317px;" width="7" height="6" viewBox="0 0 7 6"><path d="M7 0 L7 6 L0 6 Z" fill="#444"/></svg>
<div class="t" style="top:314.7px;font-size:12.2px;left:107px;">Groupes</div>
<div class="a" style="left:123px;top:349px;width:85px;height:18px;background:#ededed;border:1px solid #d3d3d3;border-radius:2px"></div>
<svg style="left:113px;top:334.0px;" width="6" height="9" viewBox="0 0 6 9"><path d="M0.5 0.5 L5.5 4.5 L0.5 8.5 Z" fill="#fff" stroke="#888" stroke-width="0.9"/></svg>
<div class="t" style="top:333.0px;font-size:12.2px;left:125.8px;">Création de pièce</div>
<svg style="left:113px;top:353.05px;" width="6" height="9" viewBox="0 0 6 9"><path d="M0.5 0.5 L5.5 4.5 L0.5 8.5 Z" fill="#fff" stroke="#888" stroke-width="0.9"/></svg>
<div class="t" style="top:352.1px;font-size:12.2px;left:125.8px;">Maquette Revit</div>
<svg style="left:113px;top:372.1px;" width="6" height="9" viewBox="0 0 6 9"><path d="M0.5 0.5 L5.5 4.5 L0.5 8.5 Z" fill="#fff" stroke="#888" stroke-width="0.9"/></svg>
<div class="t" style="top:371.1px;font-size:12.2px;left:125.8px;">Niveau</div>
<svg style="left:113px;top:391.15px;" width="6" height="9" viewBox="0 0 6 9"><path d="M0.5 0.5 L5.5 4.5 L0.5 8.5 Z" fill="#fff" stroke="#888" stroke-width="0.9"/></svg>
<div class="t" style="top:390.1px;font-size:12.2px;left:125.8px;">Niveau de sécurité</div>
<svg style="left:113px;top:410.2px;" width="6" height="9" viewBox="0 0 6 9"><path d="M0.5 0.5 L5.5 4.5 L0.5 8.5 Z" fill="#fff" stroke="#888" stroke-width="0.9"/></svg>
<div class="t" style="top:409.2px;font-size:12.2px;left:125.8px;">Phase de Construction</div>
<svg style="left:113px;top:429.25px;" width="6" height="9" viewBox="0 0 6 9"><path d="M0.5 0.5 L5.5 4.5 L0.5 8.5 Z" fill="#fff" stroke="#888" stroke-width="0.9"/></svg>
<div class="t" style="top:428.2px;font-size:12.2px;left:125.8px;">Type d&#x27;espace</div>
<div class="a" style="left:295px;top:143px;width:45px;height:24px;background:linear-gradient(#ffffff,#f6f6f6);border:1px solid #828282;border-bottom:none"></div>
<div class="t" style="top:151.0px;font-size:12.2px;left:301px;">Pièces</div>
<div class="a" style="left:296px;top:167px;width:758px;height:23px;background:linear-gradient(#ffffff 0%,#ffffff 45%,#f3f4f5 100%);border-bottom:1px solid #d8d8d8"></div>
<div class="a" style="left:358px;top:168px;width:1px;height:21px;background:#e2e2e2"></div>
<div class="a" style="left:412px;top:168px;width:1px;height:21px;background:#e2e2e2"></div>
<div class="a" style="left:512px;top:168px;width:1px;height:21px;background:#e2e2e2"></div>
<div class="a" style="left:593px;top:168px;width:1px;height:21px;background:#e2e2e2"></div>
<div class="a" style="left:693px;top:168px;width:1px;height:21px;background:#e2e2e2"></div>
<div class="a" style="left:817px;top:168px;width:1px;height:21px;background:#e2e2e2"></div>
<div class="a" style="left:926px;top:168px;width:1px;height:21px;background:#e2e2e2"></div>
<div class="a" style="left:1025px;top:168px;width:1px;height:21px;background:#e2e2e2"></div>
<div class="t" style="top:173.1px;font-size:12.2px;left:-44.5px;width:400px;text-align:right;">ID pièce</div>
<div class="t" style="top:173.1px;font-size:12.2px;left:361px;">Bâtime...</div>
<div class="t" style="top:173.1px;font-size:12.2px;left:415.5px;">Bâtiment (Nom)</div>
<div class="t" style="top:173.1px;font-size:12.2px;left:516px;">Niveau (Nu...</div>
<div class="t" style="top:173.1px;font-size:12.2px;left:596.4px;">Niveau (Nom)</div>
<div class="t" style="top:173.1px;font-size:12.2px;left:696.5px;">Numéro pièce</div>
<div class="t" style="top:173.1px;font-size:12.2px;left:820.4px;">Nom pièce</div>
<div class="t" style="top:173.1px;font-size:12.2px;left:930.4px;">Surface pro...</div>
<svg style="left:1003px;top:177px;" width="18" height="8" viewBox="0 0 18 8"><path d="M0 7.5 L9 0 L18 7.5 Z" fill="#858585"/></svg>
<div class="a" style="left:1026px;top:168px;width:28px;height:21px;overflow:hidden">
<div class="t" style="top:5.0px;font-size:12.2px;left:2px;">FPP: S</div>
</div>
<div class="t" style="top:194.1px;font-size:12.2px;left:-48.5px;width:400px;text-align:right;">8276</div>
<div class="t" style="top:194.1px;font-size:12.2px;left:363.3px;">07</div>
<div class="t" style="top:194.1px;font-size:12.2px;left:417.3px;white-space:pre;">Niveau 3</div>
<div class="t" style="top:194.1px;font-size:12.2px;left:516.9px;">02</div>
<div class="t" style="top:194.1px;font-size:12.2px;left:598.5px;">Femmes</div>
<div class="t" style="top:194.1px;font-size:12.2px;left:698.6px;">L3-017</div>
<div class="t" style="top:194.1px;font-size:12.2px;left:822.3px;transform:scaleX(0.9);transform-origin:0 0;">TOILETTE FEMME</div>
<div class="t" style="top:194.1px;font-size:12.2px;left:617.5px;width:400px;text-align:right;">0,00</div>
<div class="a" style="left:1026px;top:190.6px;width:28px;height:18px;overflow:hidden">
<div class="t" style="top:3.5px;font-size:12.2px;left:4px;">Non</div>
</div>
<div class="t" style="top:213.0px;font-size:12.2px;left:-48.5px;width:400px;text-align:right;">8295</div>
<div class="t" style="top:213.0px;font-size:12.2px;left:363.3px;">07</div>
<div class="t" style="top:213.0px;font-size:12.2px;left:417.3px;white-space:pre;">Niveau 3</div>
<div class="t" style="top:213.0px;font-size:12.2px;left:516.9px;">05</div>
<div class="t" style="top:213.0px;font-size:12.2px;left:598.5px;">Garde</div>
<div class="t" style="top:213.0px;font-size:12.2px;left:698.6px;">L3-001</div>
<div class="t" style="top:213.0px;font-size:12.2px;left:822.3px;transform:scaleX(0.9);transform-origin:0 0;">ENTREE</div>
<div class="t" style="top:213.0px;font-size:12.2px;left:617.5px;width:400px;text-align:right;">0,00</div>
<div class="a" style="left:1026px;top:209.5px;width:28px;height:18px;overflow:hidden">
<div class="t" style="top:3.5px;font-size:12.2px;left:4px;">Non</div>
</div>
<div class="t" style="top:231.9px;font-size:12.2px;left:-48.5px;width:400px;text-align:right;">8296</div>
<div class="t" style="top:231.9px;font-size:12.2px;left:363.3px;">07</div>
<div class="t" style="top:231.9px;font-size:12.2px;left:417.3px;white-space:pre;">Niveau 3</div>
<div class="t" style="top:231.9px;font-size:12.2px;left:516.9px;">05</div>
<div class="t" style="top:231.9px;font-size:12.2px;left:598.5px;">Garde</div>
<div class="t" style="top:231.9px;font-size:12.2px;left:698.6px;">L3-002</div>
<div class="t" style="top:231.9px;font-size:12.2px;left:822.3px;transform:scaleX(0.9);transform-origin:0 0;">ENTREE DE BUR...</div>
<div class="t" style="top:231.9px;font-size:12.2px;left:617.5px;width:400px;text-align:right;">0,00</div>
<div class="a" style="left:1026px;top:228.4px;width:28px;height:18px;overflow:hidden">
<div class="t" style="top:3.5px;font-size:12.2px;left:4px;">Uniq</div>
</div>
<div class="t" style="top:250.8px;font-size:12.2px;left:-48.5px;width:400px;text-align:right;">8297</div>
<div class="t" style="top:250.8px;font-size:12.2px;left:363.3px;">07</div>
<div class="t" style="top:250.8px;font-size:12.2px;left:417.3px;white-space:pre;">Niveau 3</div>
<div class="t" style="top:250.8px;font-size:12.2px;left:516.9px;">05</div>
<div class="t" style="top:250.8px;font-size:12.2px;left:598.5px;">Garde</div>
<div class="t" style="top:250.8px;font-size:12.2px;left:698.6px;">L3-003</div>
<div class="t" style="top:250.8px;font-size:12.2px;left:822.3px;transform:scaleX(0.9);transform-origin:0 0;">ENTREE DE GAR...</div>
<div class="t" style="top:250.8px;font-size:12.2px;left:617.5px;width:400px;text-align:right;">0,00</div>
<div class="a" style="left:1026px;top:247.3px;width:28px;height:18px;overflow:hidden">
<div class="t" style="top:3.5px;font-size:12.2px;left:4px;">Depu</div>
</div>
<div class="t" style="top:269.7px;font-size:12.2px;left:-48.5px;width:400px;text-align:right;">8298</div>
<div class="t" style="top:269.7px;font-size:12.2px;left:363.3px;">07</div>
<div class="t" style="top:269.7px;font-size:12.2px;left:417.3px;white-space:pre;">Niveau 3</div>
<div class="t" style="top:269.7px;font-size:12.2px;left:516.9px;">05</div>
<div class="t" style="top:269.7px;font-size:12.2px;left:598.5px;">Garde</div>
<div class="t" style="top:269.7px;font-size:12.2px;left:698.6px;">L3-004</div>
<div class="t" style="top:269.7px;font-size:12.2px;left:822.3px;transform:scaleX(0.9);transform-origin:0 0;">DEPOT D&#x27;ARMES</div>
<div class="t" style="top:269.7px;font-size:12.2px;left:617.5px;width:400px;text-align:right;">0,00</div>
<div class="a" style="left:1026px;top:266.2px;width:28px;height:18px;overflow:hidden">
<div class="t" style="top:3.5px;font-size:12.2px;left:4px;">Non</div>
</div>
<div class="t" style="top:288.6px;font-size:12.2px;left:-48.5px;width:400px;text-align:right;">8299</div>
<div class="t" style="top:288.6px;font-size:12.2px;left:363.3px;">07</div>
<div class="t" style="top:288.6px;font-size:12.2px;left:417.3px;white-space:pre;">Niveau 3</div>
<div class="t" style="top:288.6px;font-size:12.2px;left:516.9px;">06</div>
<div class="t" style="top:288.6px;font-size:12.2px;left:598.5px;">Cultural</div>
<div class="t" style="top:288.6px;font-size:12.2px;left:698.6px;">L3-005</div>
<div class="t" style="top:288.6px;font-size:12.2px;left:822.3px;transform:scaleX(0.9);transform-origin:0 0;">SALLE DE VISITE</div>
<div class="t" style="top:288.6px;font-size:12.2px;left:617.5px;width:400px;text-align:right;">0,00</div>
<div class="a" style="left:1026px;top:285.1px;width:28px;height:18px;overflow:hidden">
<div class="t" style="top:3.5px;font-size:12.2px;left:4px;">Non</div>
</div>
<div class="t" style="top:307.5px;font-size:12.2px;left:-48.5px;width:400px;text-align:right;">8300</div>
<div class="t" style="top:307.5px;font-size:12.2px;left:363.3px;">07</div>
<div class="t" style="top:307.5px;font-size:12.2px;left:417.3px;white-space:pre;">Niveau 3</div>
<div class="t" style="top:307.5px;font-size:12.2px;left:516.9px;">06</div>
<div class="t" style="top:307.5px;font-size:12.2px;left:598.5px;">Cultural</div>
<div class="t" style="top:307.5px;font-size:12.2px;left:698.6px;">L3-006</div>
<div class="t" style="top:307.5px;font-size:12.2px;left:822.3px;transform:scaleX(0.9);transform-origin:0 0;">ART</div>
<div class="t" style="top:307.5px;font-size:12.2px;left:617.5px;width:400px;text-align:right;">0,00</div>
<div class="a" style="left:1026px;top:304.0px;width:28px;height:18px;overflow:hidden">
<div class="t" style="top:3.5px;font-size:12.2px;left:4px;">Non</div>
</div>
<div class="t" style="top:326.4px;font-size:12.2px;left:-48.5px;width:400px;text-align:right;">8301</div>
<div class="t" style="top:326.4px;font-size:12.2px;left:363.3px;">07</div>
<div class="t" style="top:326.4px;font-size:12.2px;left:417.3px;white-space:pre;">Niveau 3</div>
<div class="t" style="top:326.4px;font-size:12.2px;left:516.9px;">06</div>
<div class="t" style="top:326.4px;font-size:12.2px;left:598.5px;">Cultural</div>
<div class="t" style="top:326.4px;font-size:12.2px;left:698.6px;">L3-007</div>
<div class="t" style="top:326.4px;font-size:12.2px;left:822.3px;transform:scaleX(0.9);transform-origin:0 0;">PASTORAL</div>
<div class="t" style="top:326.4px;font-size:12.2px;left:617.5px;width:400px;text-align:right;">0,00</div>
<div class="a" style="left:1026px;top:322.9px;width:28px;height:18px;overflow:hidden">
<div class="t" style="top:3.5px;font-size:12.2px;left:4px;">Non</div>
</div>
<div class="t" style="top:345.3px;font-size:12.2px;left:-48.5px;width:400px;text-align:right;">8302</div>
<div class="t" style="top:345.3px;font-size:12.2px;left:363.3px;">07</div>
<div class="t" style="top:345.3px;font-size:12.2px;left:417.3px;white-space:pre;">Niveau 3</div>
<div class="t" style="top:345.3px;font-size:12.2px;left:516.9px;">06</div>
<div class="t" style="top:345.3px;font-size:12.2px;left:598.5px;">Cultural</div>
<div class="t" style="top:345.3px;font-size:12.2px;left:698.6px;">L3-008</div>
<div class="t" style="top:345.3px;font-size:12.2px;left:822.3px;transform:scaleX(0.9);transform-origin:0 0;">ENTREE DE GAR...</div>
<div class="t" style="top:345.3px;font-size:12.2px;left:617.5px;width:400px;text-align:right;">0,00</div>
<div class="a" style="left:1026px;top:341.8px;width:28px;height:18px;overflow:hidden">
<div class="t" style="top:3.5px;font-size:12.2px;left:4px;">Depu</div>
</div>
<div class="t" style="top:364.2px;font-size:12.2px;left:-48.5px;width:400px;text-align:right;">8309</div>
<div class="t" style="top:364.2px;font-size:12.2px;left:363.3px;">08</div>
<div class="t" style="top:364.2px;font-size:12.2px;left:417.3px;white-space:pre;">Niveau 4</div>
<div class="t" style="top:364.2px;font-size:12.2px;left:516.9px;">01</div>
<div class="t" style="top:364.2px;font-size:12.2px;left:598.5px;">T&amp;E</div>
<div class="t" style="top:364.2px;font-size:12.2px;left:698.6px;">L4-013</div>
<div class="t" style="top:364.2px;font-size:12.2px;left:822.3px;transform:scaleX(0.9);transform-origin:0 0;">RISER</div>
<div class="t" style="top:364.2px;font-size:12.2px;left:617.5px;width:400px;text-align:right;">0,00</div>
<div class="a" style="left:1026px;top:360.7px;width:28px;height:18px;overflow:hidden">
<div class="t" style="top:3.5px;font-size:12.2px;left:4px;">Non</div>
</div>
<div class="t" style="top:383.1px;font-size:12.2px;left:-48.5px;width:400px;text-align:right;">8342</div>
<div class="t" style="top:383.1px;font-size:12.2px;left:363.3px;">10</div>
<div class="t" style="top:383.1px;font-size:12.2px;left:417.3px;white-space:pre;">Niveau  10</div>
<div class="t" style="top:383.1px;font-size:12.2px;left:516.9px;">01</div>
<div class="t" style="top:383.1px;font-size:12.2px;left:598.5px;">Unit 1</div>
<div class="t" style="top:383.1px;font-size:12.2px;left:698.6px;">L10-008</div>
<div class="t" style="top:383.1px;font-size:12.2px;left:822.3px;transform:scaleX(0.9);transform-origin:0 0;">PLACARD 2</div>
<div class="t" style="top:383.1px;font-size:12.2px;left:617.5px;width:400px;text-align:right;">0,00</div>
<div class="a" style="left:1026px;top:379.6px;width:28px;height:18px;overflow:hidden">
<div class="t" style="top:3.5px;font-size:12.2px;left:4px;">Depu</div>
</div>
<div class="t" style="top:402.0px;font-size:12.2px;left:-48.5px;width:400px;text-align:right;">8354</div>
<div class="t" style="top:402.0px;font-size:12.2px;left:363.3px;">10</div>
<div class="t" style="top:402.0px;font-size:12.2px;left:417.3px;white-space:pre;">Niveau  10</div>
<div class="t" style="top:402.0px;font-size:12.2px;left:516.9px;">02</div>
<div class="t" style="top:402.0px;font-size:12.2px;left:598.5px;">Unit 2</div>
<div class="t" style="top:402.0px;font-size:12.2px;left:698.6px;">L10-019</div>
<div class="t" style="top:402.0px;font-size:12.2px;left:822.3px;transform:scaleX(0.9);transform-origin:0 0;">BUANDERIE</div>
<div class="t" style="top:402.0px;font-size:12.2px;left:617.5px;width:400px;text-align:right;">0,00</div>
<div class="a" style="left:1026px;top:398.5px;width:28px;height:18px;overflow:hidden">
<div class="t" style="top:3.5px;font-size:12.2px;left:4px;">Depu</div>
</div>
<div class="t" style="top:420.9px;font-size:12.2px;left:-48.5px;width:400px;text-align:right;">8355</div>
<div class="t" style="top:420.9px;font-size:12.2px;left:363.3px;">10</div>
<div class="t" style="top:420.9px;font-size:12.2px;left:417.3px;white-space:pre;">Niveau  10</div>
<div class="t" style="top:420.9px;font-size:12.2px;left:516.9px;">02</div>
<div class="t" style="top:420.9px;font-size:12.2px;left:598.5px;">Unit 2</div>
<div class="t" style="top:420.9px;font-size:12.2px;left:698.6px;">L10-018</div>
<div class="t" style="top:420.9px;font-size:12.2px;left:822.3px;transform:scaleX(0.9);transform-origin:0 0;">PLACARD 2</div>
<div class="t" style="top:420.9px;font-size:12.2px;left:617.5px;width:400px;text-align:right;">0,00</div>
<div class="a" style="left:1026px;top:417.4px;width:28px;height:18px;overflow:hidden">
<div class="t" style="top:3.5px;font-size:12.2px;left:4px;">Depu</div>
</div>
<div class="t" style="top:439.8px;font-size:12.2px;left:-48.5px;width:400px;text-align:right;">8378</div>
<div class="t" style="top:439.8px;font-size:12.2px;left:363.3px;">10</div>
<div class="t" style="top:439.8px;font-size:12.2px;left:417.3px;white-space:pre;">Niveau  10</div>
<div class="t" style="top:439.8px;font-size:12.2px;left:516.9px;">04</div>
<div class="t" style="top:439.8px;font-size:12.2px;left:598.5px;">T&amp;E</div>
<div class="t" style="top:439.8px;font-size:12.2px;left:698.6px;">L10-028</div>
<div class="t" style="top:439.8px;font-size:12.2px;left:822.3px;transform:scaleX(0.9);transform-origin:0 0;">RISER HYD 2</div>
<div class="t" style="top:439.8px;font-size:12.2px;left:617.5px;width:400px;text-align:right;">0,00</div>
<div class="a" style="left:1026px;top:436.3px;width:28px;height:18px;overflow:hidden">
<div class="t" style="top:3.5px;font-size:12.2px;left:4px;">Non</div>
</div>
<div class="a" style="left:1054px;top:167px;width:17px;height:289px;background:#f0f0f0"></div>
<div class="a" style="left:1054px;top:184px;width:17px;height:36px;background:#cdcdcd"></div>
<svg style="left:1059px;top:173px;" width="8" height="6" viewBox="0 0 8 6"><path d="M0.7 5.3 L4 1.2 L7.3 5.3" fill="none" stroke="#9a9a9a" stroke-width="1.3"/></svg>
<svg style="left:1059px;top:444px;" width="8" height="6" viewBox="0 0 8 6"><path d="M0.7 0.7 L4 4.8 L7.3 0.7" fill="none" stroke="#9a9a9a" stroke-width="1.3"/></svg>
<div class="a" style="left:296px;top:456px;width:775px;height:17px;background:#f0f0f0"></div>
<div class="a" style="left:1054px;top:456px;width:17px;height:1px;background:#fff"></div>
<div class="a" style="left:313px;top:456px;width:612px;height:17px;background:#cdcdcd"></div>
<svg style="left:300px;top:460px;" width="6" height="10" viewBox="0 0 6 10"><path d="M5.5 0.5 L1 5 L5.5 9.5" fill="none" stroke="#a0a0a0" stroke-width="1.1"/></svg>
<svg style="left:1043px;top:460px;" width="6" height="10" viewBox="0 0 6 10"><path d="M0.5 0.5 L5 5 L0.5 9.5" fill="none" stroke="#a0a0a0" stroke-width="1.1"/></svg>
<div class="a" style="left:296px;top:473px;width:775px;height:23px;background:#f3f3f3"></div>
<div class="t" style="top:480.2px;font-size:10.2px;color:#ff0000;left:301.5px;letter-spacing:-0.3px;">100 de 275</div>
<div class="t" style="top:480.2px;font-size:10.2px;left:365px;letter-spacing:-0.2px;">Afficher tous</div>
<div class="a" style="left:565.5px;top:474px;width:171.5px;height:20px;border:1px solid #d2dbe1;border-radius:3px;background:#f3f3f3"></div>
<div class="t" style="top:479.4px;font-size:10.2px;left:572.5px;letter-spacing:-0.2px;">Total surface programmée: 5 045,50</div>
<div class="a" style="left:739.5px;top:474px;width:115.5px;height:20px;border:1px solid #d2dbe1;border-radius:3px;background:#f3f3f3"></div>
<div class="t" style="top:479.4px;font-size:10.2px;left:746.5px;letter-spacing:-0.2px;">Surface totale: 5 046,61</div>
<div class="a" style="left:857.5px;top:474px;width:192.5px;height:20px;border:1px solid #d2dbe1;border-radius:3px;background:#f3f3f3"></div>
<div class="t" style="top:479.4px;font-size:10.2px;left:864.5px;letter-spacing:-0.2px;">Total surface programmée brut: 5 045,50</div>
<svg style="left:1054px;top:477px;" width="15" height="15" viewBox="0 0 15 15"><rect x="0.5" y="2.5" width="4" height="11" fill="#fff" stroke="#888" stroke-width="0.9"/><rect x="9.5" y="2.5" width="4" height="11" fill="#fff" stroke="#888" stroke-width="0.9"/><rect x="5" y="0.5" width="4" height="11" fill="#f05a28" stroke="#c04010" stroke-width="0.7"/></svg>
<div class="a" style="left:295px;top:499px;width:70px;height:24px;background:linear-gradient(#ffffff,#f6f6f6);border:1px solid #828282;border-bottom:none"></div>
<div class="t" style="top:506.9px;font-size:12.2px;left:301.2px;">Surface</div>
<svg style="left:350px;top:508px;" width="8.5" height="7.5" viewBox="0 0 8.5 7.5"><path d="M0.5 0.5 L8 7 M8 0.5 L0.5 7" stroke="#111" stroke-width="1.5"/></svg>
<div class="a" style="left:296px;top:523px;width:775px;height:21px;background:linear-gradient(#ffffff 0%,#ffffff 45%,#f3f4f5 100%);border-bottom:1px solid #d8d8d8"></div>
<div class="a" style="left:498px;top:524px;width:1px;height:20px;background:#e2e2e2"></div>
<div class="a" style="left:598px;top:524px;width:1px;height:20px;background:#e2e2e2"></div>
<div class="a" style="left:698px;top:524px;width:1px;height:20px;background:#e2e2e2"></div>
<div class="a" style="left:798px;top:524px;width:1px;height:20px;background:#e2e2e2"></div>
<div class="a" style="left:898px;top:524px;width:1px;height:20px;background:#e2e2e2"></div>
<div class="a" style="left:998px;top:524px;width:1px;height:20px;background:#e2e2e2"></div>
<div class="t" style="top:528.1px;font-size:12.2px;left:301.8px;">Nom</div>
<div class="t" style="top:528.1px;font-size:12.2px;left:348px;width:400px;text-align:center;">Couleur</div>
<div class="t" style="top:528.1px;font-size:12.2px;left:295.1px;width:400px;text-align:right;"># pièces</div>
<div class="t" style="top:528.1px;font-size:12.2px;left:394.6px;width:400px;text-align:right;"># Gabarit</div>
<div class="t" style="top:528.1px;font-size:12.2px;left:494.4px;width:400px;text-align:right;">Total prog</div>
<div class="t" style="top:528.1px;font-size:12.2px;left:594.2px;width:400px;text-align:right;">Programmé brut</div>
<div class="a" style="left:999px;top:523px;width:72px;height:21px;overflow:hidden">
<div class="t" style="top:5.1px;font-size:12.2px;left:27.4px;">Total des</div>
</div>
<div class="t" style="top:548.2px;font-size:12.2px;left:303.6px;">Maquette Revit</div>
<div class="t" style="top:548.2px;font-size:12.2px;left:290.5px;width:400px;text-align:right;">275</div>
<div class="t" style="top:548.2px;font-size:12.2px;left:390.70000000000005px;width:400px;text-align:right;">0</div>
<div class="t" style="top:548.2px;font-size:12.2px;left:490.5px;width:400px;text-align:right;">5 045,50</div>
<div class="t" style="top:548.2px;font-size:12.2px;left:590.3px;width:400px;text-align:right;">5 045,50</div>
<div class="a" style="left:999px;top:544.7px;width:72px;height:18px;overflow:hidden">
<div class="t" style="top:3.5px;font-size:12.2px;left:-307px;width:400px;text-align:right;">5 046,61</div>
</div>
<div class="t" style="top:567.2px;font-size:12.2px;left:313.5px;">Maquette A</div>
<div class="a" style="left:532px;top:564.13px;width:30px;height:15.5px;background:#88b59a"></div>
<div class="t" style="top:567.2px;font-size:12.2px;left:290.5px;width:400px;text-align:right;">40</div>
<div class="t" style="top:567.2px;font-size:12.2px;left:390.70000000000005px;width:400px;text-align:right;">0</div>
<div class="t" style="top:567.2px;font-size:12.2px;left:490.5px;width:400px;text-align:right;">288,50</div>
<div class="t" style="top:567.2px;font-size:12.2px;left:590.3px;width:400px;text-align:right;">288,50</div>
<div class="a" style="left:999px;top:563.7px;width:72px;height:18px;overflow:hidden">
<div class="t" style="top:3.5px;font-size:12.2px;left:-307px;width:400px;text-align:right;">322,36</div>
</div>
<div class="t" style="top:586.3px;font-size:12.2px;left:313.5px;">Maquette B</div>
<div class="a" style="left:532px;top:583.16px;width:30px;height:15.5px;background:#cdf542"></div>
<div class="t" style="top:586.3px;font-size:12.2px;left:290.5px;width:400px;text-align:right;">28</div>
<div class="t" style="top:586.3px;font-size:12.2px;left:390.70000000000005px;width:400px;text-align:right;">0</div>
<div class="t" style="top:586.3px;font-size:12.2px;left:490.5px;width:400px;text-align:right;">336,00</div>
<div class="t" style="top:586.3px;font-size:12.2px;left:590.3px;width:400px;text-align:right;">336,00</div>
<div class="a" style="left:999px;top:582.8px;width:72px;height:18px;overflow:hidden">
<div class="t" style="top:3.5px;font-size:12.2px;left:-307px;width:400px;text-align:right;">356,40</div>
</div>
<div class="t" style="top:605.3px;font-size:12.2px;left:313.5px;">Maquette C</div>
<div class="a" style="left:532px;top:602.19px;width:30px;height:15.5px;background:#c3ecf9"></div>
<div class="t" style="top:605.3px;font-size:12.2px;left:290.5px;width:400px;text-align:right;">28</div>
<div class="t" style="top:605.3px;font-size:12.2px;left:390.70000000000005px;width:400px;text-align:right;">0</div>
<div class="t" style="top:605.3px;font-size:12.2px;left:490.5px;width:400px;text-align:right;">341,00</div>
<div class="t" style="top:605.3px;font-size:12.2px;left:590.3px;width:400px;text-align:right;">341,00</div>
<div class="a" style="left:999px;top:601.8px;width:72px;height:18px;overflow:hidden">
<div class="t" style="top:3.5px;font-size:12.2px;left:-307px;width:400px;text-align:right;">355,30</div>
</div>
<div class="t" style="top:624.3px;font-size:12.2px;left:313.5px;">complexdemo</div>
<div class="a" style="left:532px;top:621.22px;width:30px;height:15.5px;background:#d99595"></div>
<div class="t" style="top:624.3px;font-size:12.2px;left:290.5px;width:400px;text-align:right;">179</div>
<div class="t" style="top:624.3px;font-size:12.2px;left:390.70000000000005px;width:400px;text-align:right;">0</div>
<div class="t" style="top:624.3px;font-size:12.2px;left:490.5px;width:400px;text-align:right;">4 080,00</div>
<div class="t" style="top:624.3px;font-size:12.2px;left:590.3px;width:400px;text-align:right;">4 080,00</div>
<div class="a" style="left:999px;top:620.8px;width:72px;height:18px;overflow:hidden">
<div class="t" style="top:3.5px;font-size:12.2px;left:-307px;width:400px;text-align:right;">4 012,55</div>
</div>
<div class="a" style="left:296px;top:948px;width:775px;height:17px;background:#f0f0f0"></div>
<div class="a" style="left:313px;top:948px;width:634px;height:17px;background:#cdcdcd"></div>
<svg style="left:300px;top:952px;" width="6" height="10" viewBox="0 0 6 10"><path d="M5.5 0.5 L1 5 L5.5 9.5" fill="none" stroke="#a0a0a0" stroke-width="1.1"/></svg>
<svg style="left:1060px;top:952px;" width="6" height="10" viewBox="0 0 6 10"><path d="M0.5 0.5 L5 5 L0.5 9.5" fill="none" stroke="#a0a0a0" stroke-width="1.1"/></svg>
<div class="a" style="left:296px;top:965px;width:775px;height:23px;background:#f3f3f3"></div>
<div class="t" style="top:972.9px;font-size:10.2px;left:301px;letter-spacing:-0.2px;">4 de 4</div>
<svg style="left:1054px;top:970px;" width="15" height="15" viewBox="0 0 15 15"><rect x="0.5" y="2.5" width="4" height="11" fill="#fff" stroke="#888" stroke-width="0.9"/><rect x="9.5" y="2.5" width="4" height="11" fill="#fff" stroke="#888" stroke-width="0.9"/><rect x="5" y="0.5" width="4" height="11" fill="#f05a28" stroke="#c04010" stroke-width="0.7"/></svg>
<svg style="left:1086px;top:146px;" width="24" height="18" viewBox="0 0 24 18"><rect x="0.5" y="0.5" width="23" height="17" fill="#fff" stroke="#555" stroke-width="1"/><path d="M0.5 5.5 L23.5 5.5 M7 5.5 L7 17.5 M7 11.5 L23.5 11.5" stroke="#555" stroke-width="1" fill="none"/></svg>
<svg style="left:1122px;top:153px;" width="7" height="4" viewBox="0 0 7 4"><path d="M0 0 L7 0 L3.5 3.8 Z" fill="#111"/></svg>
<svg style="left:1092px;top:176px;" width="28" height="28" viewBox="0 0 28 28"><circle cx="14" cy="14" r="12.3" fill="#fff" stroke="#222" stroke-width="1.2"/></svg>
<div class="t" style="top:181.1px;font-size:20px;left:906px;width:400px;text-align:center;font-family:Liberation Serif;font-weight:bold;color:#111;">i</div>
<svg style="left:1093px;top:212px;" width="26" height="26" viewBox="0 0 26 26"><path d="M13 1 L24 6.5 L24 19.5 L13 25 L2 19.5 L2 6.5 Z" fill="#fff" stroke="#333" stroke-width="1.1"/><path d="M8.5 6.5 L16 6.5 L19 9.5 L19 20 L8.5 20 Z" fill="#fff" stroke="#333" stroke-width="1"/><path d="M10.5 12 L17 12 M10.5 14.5 L17 14.5 M10.5 17 L17 17" stroke="#333" stroke-width="0.9"/></svg>
<svg style="left:1093px;top:245px;" width="26" height="26" viewBox="0 0 26 26"><path d="M13 1.2 L24.3 7 L24.3 19 L13 24.8 L1.7 19 L1.7 7 Z" fill="#fff" stroke="#333" stroke-width="1.1"/><path d="M13 1.2 L13 5.5 M1.7 19 L7 16.5 M24.3 19 L19 16.5" stroke="#333" stroke-width="0.9"/><path d="M13 5.5 L19 8.5 L19 16.5 L13 19.5 L7 16.5 L7 8.5 Z M7 8.5 L13 11.5 L19 8.5 M13 11.5 L13 19.5" fill="#fff" stroke="#333" stroke-width="1"/></svg>
<svg style="left:1093px;top:279px;" width="25" height="20" viewBox="0 0 25 20"><path d="M2.5 4 L6 4 L8 1 L16 1 L18 4 L22.5 4 A2 2 0 0 1 24.5 6 L24.5 17 A2 2 0 0 1 22.5 19 L2.5 19 A2 2 0 0 1 0.5 17 L0.5 6 A2 2 0 0 1 2.5 4 Z" fill="#fff" stroke="#333" stroke-width="1"/><circle cx="15.5" cy="11" r="5.5" fill="none" stroke="#333" stroke-width="1"/><circle cx="15.5" cy="11" r="3.3" fill="none" stroke="#333" stroke-width="1"/><circle cx="4.5" cy="7.5" r="1.3" fill="none" stroke="#333" stroke-width="0.8"/></svg>
<svg style="left:1093px;top:313px;" width="21" height="26" viewBox="0 0 21 26"><path d="M0.7 1 L13 1 L19.8 7.5 L19.8 25.3 L0.7 25.3 Z" fill="#fff" stroke="#333" stroke-width="1"/><path d="M13 1 L13 7.5 L19.8 7.5" fill="none" stroke="#333" stroke-width="1"/><path d="M8.5 12 L8.5 4 A3 3 0 0 0 2.5 4 L2.5 16 A2.5 2.5 0 0 0 7.5 16 L7.5 5.5 A1 1 0 0 0 5.5 5.5 L5.5 14" fill="#fff" stroke="#333" stroke-width="1"/></svg>
<svg style="left:1093px;top:347px;" width="21" height="26" viewBox="0 0 21 26"><path d="M0.7 1 L13 1 L19.8 7.5 L19.8 25.3 L0.7 25.3 Z" fill="#fff" stroke="#333" stroke-width="1"/><path d="M13 1 L13 7.5 L19.8 7.5" fill="none" stroke="#333" stroke-width="1"/><circle cx="10" cy="15.5" r="5.5" fill="none" stroke="#333" stroke-width="1"/><path d="M10 12 L10 15.8 L13.2 15.8" fill="none" stroke="#333" stroke-width="1"/></svg>
<svg style="left:1090px;top:380px;" width="28" height="22" viewBox="0 0 28 22"><rect x="4.5" y="9" width="13" height="10" fill="#9a9a9a"/><path d="M3.5 3 L3.5 19.5 L25.5 19.5" fill="none" stroke="#333" stroke-width="1.2"/><path d="M1.5 5 L3.5 2.3 L5.5 5 M23 17.5 L25.7 19.5 L23 21.5" fill="none" stroke="#333" stroke-width="1"/></svg>
</body></html>
